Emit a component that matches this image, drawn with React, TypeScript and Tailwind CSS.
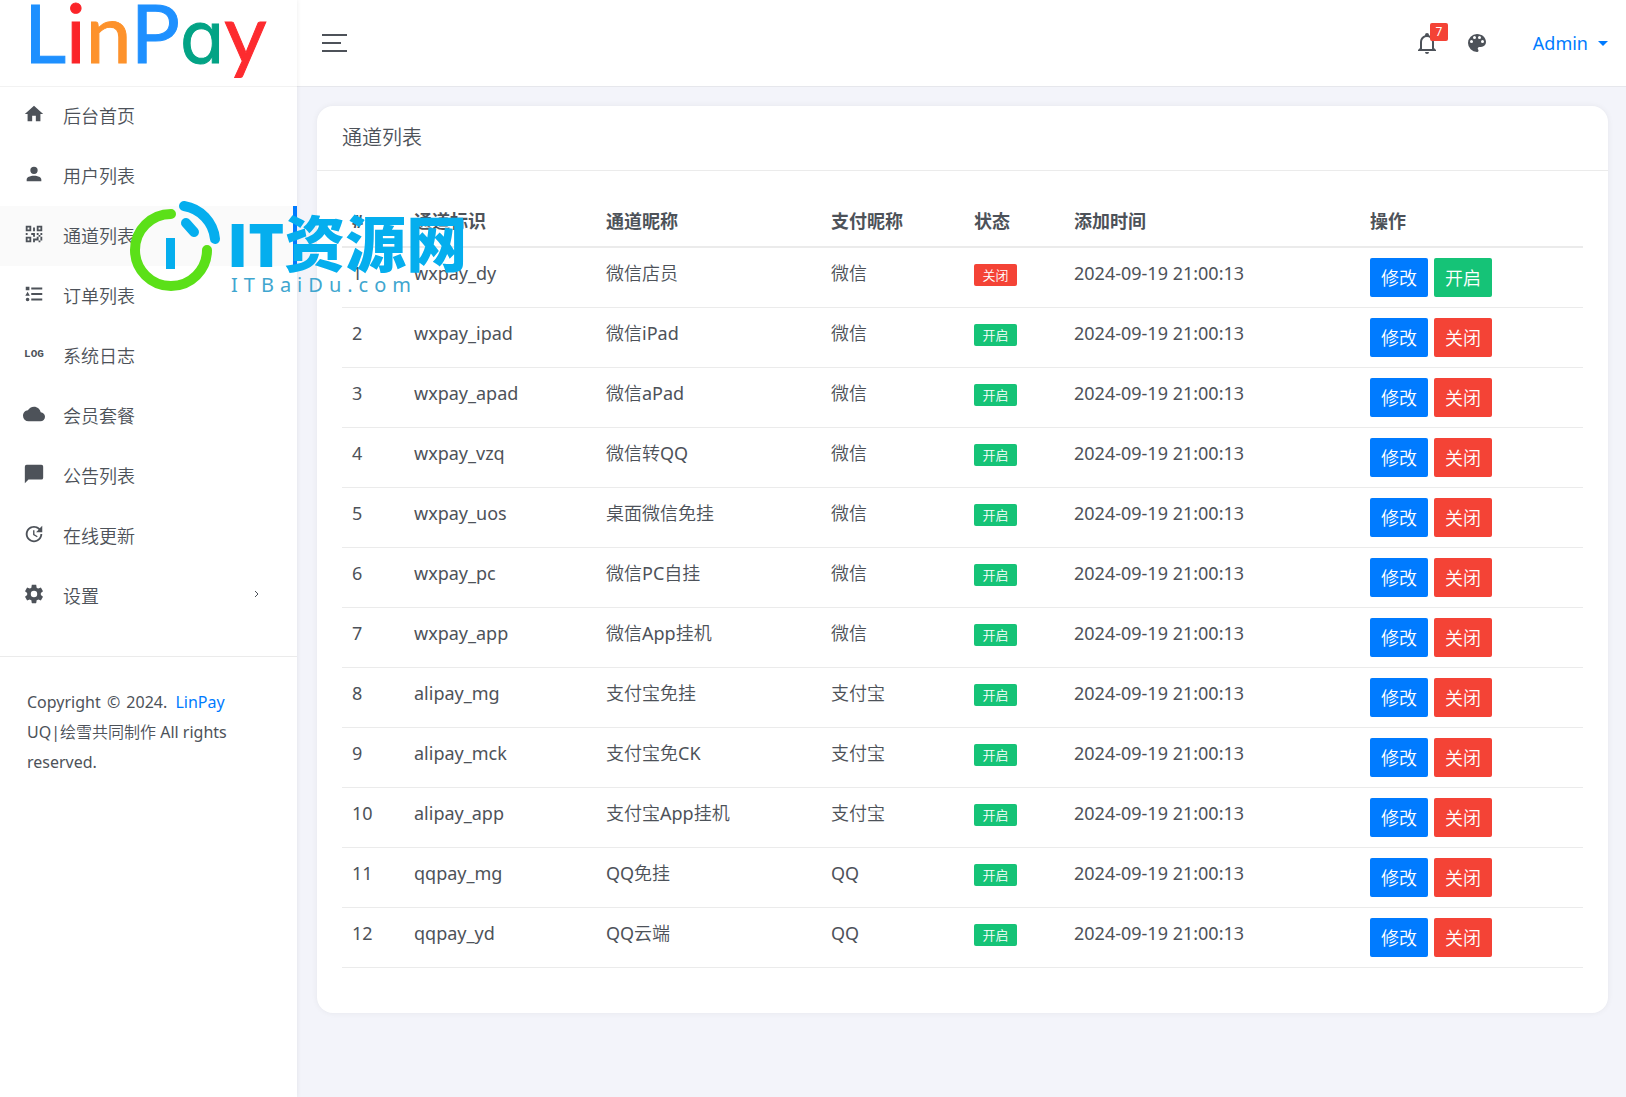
import { clsx } from 'clsx';

const icons = {
  home: 'M10,20V14H14V20H19V12H22L12,3L2,12H5V20H10Z',
  account:
    'M12,4A4,4 0 0,1 16,8A4,4 0 0,1 12,12A4,4 0 0,1 8,8A4,4 0 0,1 12,4M12,14C16.42,14 20,15.79 20,18V20H4V18C4,15.79 7.58,14 12,14Z',
  qrcode:
    'M3,11H5V13H3V11M11,5H13V9H11V5M9,11H13V15H11V13H9V11M15,11H17V13H19V11H21V13H19V15H21V19H19V21H17V19H13V21H11V17H15V15H17V13H15V11M19,19V15H17V19H19M15,3H21V9H15V3M17,5V7H19V5H17M3,3H9V9H3V3M5,5V7H7V5H5M3,15H9V21H3V15M5,17V19H7V17H5Z',
  list: 'M5,9.5L7.5,14H2.5L5,9.5M3,4H7V8H3V4M5,20A2,2 0 0,0 7,18A2,2 0 0,0 5,16A2,2 0 0,0 3,18A2,2 0 0,0 5,20M9,5V7H21V5H9M9,19H21V17H9V19M9,13H21V11H9V13Z',
  cloud:
    'M19.35,10.03C18.67,6.59 15.64,4 12,4C9.11,4 6.6,5.64 5.35,8.03C2.34,8.36 0,10.9 0,14A6,6 0 0,0 6,20H19A5,5 0 0,0 24,15C24,12.36 21.95,10.22 19.35,10.03Z',
  message: 'M20,2H4A2,2 0 0,0 2,4V22L6,18H20A2,2 0 0,0 22,16V4C22,2.89 21.1,2 20,2Z',
  update:
    'M21,10.12H14.22L16.96,7.3C14.23,4.6 9.81,4.5 7.08,7.2C4.35,9.91 4.35,14.28 7.08,17C9.81,19.7 14.23,19.7 16.96,17C18.32,15.65 19,14.08 19,12.1H21C21,14.08 20.12,16.65 18.36,18.39C14.85,21.87 9.15,21.87 5.64,18.39C2.14,14.92 2.11,9.28 5.62,5.81C9.13,2.34 14.76,2.34 18.27,5.81L21,3V10.12M12.5,8V12.25L16,14.33L15.28,15.54L11,13V8H12.5Z',
  settings:
    'M12,15.5A3.5,3.5 0 0,1 8.5,12A3.5,3.5 0 0,1 12,8.5A3.5,3.5 0 0,1 15.5,12A3.5,3.5 0 0,1 12,15.5M19.43,12.97C19.47,12.65 19.5,12.33 19.5,12C19.5,11.67 19.47,11.34 19.43,11L21.54,9.37C21.73,9.22 21.78,8.95 21.66,8.73L19.66,5.27C19.54,5.05 19.27,4.96 19.05,5.05L16.56,6.05C16.04,5.66 15.5,5.32 14.87,5.07L14.5,2.42C14.46,2.18 14.25,2 14,2H10C9.75,2 9.54,2.18 9.5,2.42L9.13,5.07C8.5,5.32 7.96,5.66 7.44,6.05L4.95,5.05C4.73,4.96 4.46,5.05 4.34,5.27L2.34,8.73C2.21,8.95 2.27,9.22 2.46,9.37L4.57,11C4.53,11.34 4.5,11.67 4.5,12C4.5,12.33 4.53,12.65 4.57,12.97L2.46,14.63C2.27,14.78 2.21,15.05 2.34,15.27L4.34,18.73C4.46,18.95 4.73,19.03 4.95,18.95L7.44,17.94C7.96,18.34 8.5,18.68 9.13,18.93L9.5,21.58C9.54,21.82 9.75,22 10,22H14C14.25,22 14.46,21.82 14.5,21.58L14.87,18.93C15.5,18.67 16.04,18.34 16.56,17.94L19.05,18.95C19.27,19.03 19.54,18.95 19.66,18.73L21.66,15.27C21.78,15.05 21.73,14.78 21.54,14.63L19.43,12.97Z',
  bell: 'M10,21H14A2,2 0 0,1 12,23A2,2 0 0,1 10,21M21,19V20H3V19L5,17V11C5,7.9 7.03,5.17 10,4.29C10,4.19 10,4.1 10,4A2,2 0 0,1 12,2A2,2 0 0,1 14,4C14,4.1 14,4.19 14,4.29C16.97,5.17 19,7.9 19,11V17L21,19M17,11A5,5 0 0,0 12,6A5,5 0 0,0 7,11V18H17V11Z',
  palette:
    'M17.5,12A1.5,1.5 0 0,1 16,10.5A1.5,1.5 0 0,1 17.5,9A1.5,1.5 0 0,1 19,10.5A1.5,1.5 0 0,1 17.5,12M14.5,8A1.5,1.5 0 0,1 13,6.5A1.5,1.5 0 0,1 14.5,5A1.5,1.5 0 0,1 16,6.5A1.5,1.5 0 0,1 14.5,8M9.5,8A1.5,1.5 0 0,1 8,6.5A1.5,1.5 0 0,1 9.5,5A1.5,1.5 0 0,1 11,6.5A1.5,1.5 0 0,1 9.5,8M6.5,12A1.5,1.5 0 0,1 5,10.5A1.5,1.5 0 0,1 6.5,9A1.5,1.5 0 0,1 8,10.5A1.5,1.5 0 0,1 6.5,12M12,3A9,9 0 0,0 3,12A9,9 0 0,0 12,21A1.5,1.5 0 0,0 13.5,19.5C13.5,19.11 13.35,18.76 13.11,18.5C12.88,18.23 12.73,17.88 12.73,17.5A1.5,1.5 0 0,1 14.23,16H16A5,5 0 0,0 21,11C21,6.58 16.97,3 12,3Z',
};

type IconName = keyof typeof icons;

const Icon = ({ name, className }: { name: IconName; className?: string }) => (
  <svg viewBox="0 0 24 24" className={className} fill="currentColor" aria-hidden="true">
    <path d={icons[name]} />
  </svg>
);

const menu: { icon: IconName | 'log'; label: string; active?: boolean; sub?: boolean }[] = [
  { icon: 'home', label: '后台首页' },
  { icon: 'account', label: '用户列表' },
  { icon: 'qrcode', label: '通道列表', active: true },
  { icon: 'list', label: '订单列表' },
  { icon: 'log', label: '系统日志' },
  { icon: 'cloud', label: '会员套餐' },
  { icon: 'message', label: '公告列表' },
  { icon: 'update', label: '在线更新' },
  { icon: 'settings', label: '设置', sub: true },
];

const columns = [
  { title: '#', width: 'w-[62px]' },
  { title: '通道标识', width: 'w-[192px]' },
  { title: '通道昵称', width: 'w-[225px]' },
  { title: '支付昵称', width: 'w-[143px]' },
  { title: '状态', width: 'w-[100px]' },
  { title: '添加时间', width: 'w-[296px]' },
  { title: '操作', width: '' },
];

const channels = [
  { code: 'wxpay_dy', name: '微信店员', pay: '微信', open: false },
  { code: 'wxpay_ipad', name: '微信iPad', pay: '微信', open: true },
  { code: 'wxpay_apad', name: '微信aPad', pay: '微信', open: true },
  { code: 'wxpay_vzq', name: '微信转QQ', pay: '微信', open: true },
  { code: 'wxpay_uos', name: '桌面微信免挂', pay: '微信', open: true },
  { code: 'wxpay_pc', name: '微信PC自挂', pay: '微信', open: true },
  { code: 'wxpay_app', name: '微信App挂机', pay: '微信', open: true },
  { code: 'alipay_mg', name: '支付宝免挂', pay: '支付宝', open: true },
  { code: 'alipay_mck', name: '支付宝免CK', pay: '支付宝', open: true },
  { code: 'alipay_app', name: '支付宝App挂机', pay: '支付宝', open: true },
  { code: 'qqpay_mg', name: 'QQ免挂', pay: 'QQ', open: true },
  { code: 'qqpay_yd', name: 'QQ云端', pay: 'QQ', open: true },
];

const Logo = () => (
  <svg viewBox="0 0 297 86" className="block h-[86px] w-[297px] overflow-visible" role="img" aria-label="LinPay">
    <text x="24" y="63" fontSize="82" strokeWidth="1" className="font-['Lato',sans-serif]">
      <tspan fill="#1e90ff" stroke="#1e90ff">L</tspan>
      <tspan fill="#fb2429" stroke="#fb2429">i</tspan>
      <tspan fill="#fd922c" stroke="#fd922c">n</tspan>
      <tspan fill="#1e90ff" stroke="#1e90ff">P</tspan>
      <tspan
        fill="#03a385"
        stroke="#03a385"
        fontSize="72"
        className="font-['Inter',sans-serif] [font-feature-settings:'cv11']"
      >
        a
      </tspan>
      <tspan fill="#fd2b2f" stroke="#fd2b2f">y</tspan>
    </text>
  </svg>
);

const Watermark = () => (
  <svg
    viewBox="0 0 350 100"
    className="pointer-events-none absolute left-[125px] top-[196px] z-20 h-[100px] w-[350px] overflow-visible"
    aria-hidden="true"
  >
    <g fill="none" strokeLinecap="round" strokeWidth="10">
      <path d="M46 18A36 36 0 1 0 82 54" stroke="#5be018" />
      <path d="M59 10A37 37 0 0 1 90 43" stroke="#05aeee" />
      <path d="M61 27L69 36" stroke="#05aeee" />
    </g>
    <path d="M41 42H50V73H41Z" fill="#05aeee" />
    <text x="102" y="71" fontSize="61" fontWeight="900" fill="#05aeee" className="font-['Open_Sans','Noto_Sans_CJK_SC',sans-serif]">
      IT资源网
    </text>
    <text x="106" y="96" fontSize="20" fill="#3fa6cf" className="font-['Noto_Sans',sans-serif] tracking-[6px]">
      ITBaiDu.com
    </text>
  </svg>
);

const Sidebar = () => (
  <aside className="z-10 w-[297px] shrink-0 bg-white shadow-[0_0_5px_rgba(0,0,0,0.08)]">
    <a href="#" className="block border-b border-[#f2f2f2]">
      <Logo />
    </a>
    <nav className="-mt-px pb-[30px]">
      {menu.map((item) => (
        <a
          key={item.label}
          href="#"
          className={clsx(
            'flex h-[60px] items-center pl-[23px] pr-9',
            item.active && 'bg-[#fafafa] shadow-[inset_-4px_0_0_#007bff]'
          )}
        >
          <span className="mr-[18px] flex w-[22px] justify-center pb-1">
            {item.icon === 'log' ? (
              <span className="font-['Liberation_Mono',monospace] text-[11px] font-bold">LOG</span>
            ) : (
              <Icon name={item.icon} className="size-[22px]" />
            )}
          </span>
          <span>{item.label}</span>
          {item.sub && (
            <svg viewBox="0 0 8 8" className="ml-auto mb-1 size-2" fill="none" stroke="currentColor">
              <path d="M2 1L5 4L2 7" />
            </svg>
          )}
        </a>
      ))}
    </nav>
    <footer className="border-t border-[#ebebeb] px-[27px] py-[30px] text-base leading-[30px]">
      Copyright <span className="mx-0.5">©</span> 2024. <a href="#" className="ml-1 text-[#007bff]">LinPay</a>
      <br />
      UQ|绘雪共同制作 All rights reserved.
    </footer>
  </aside>
);

const Header = () => (
  <header className="flex h-[87px] items-center border-b border-[#e6e7ec] bg-white pl-[25px] pr-[18px]">
    <button type="button" aria-label="菜单" className="flex w-[25px] flex-col gap-1.5">
      <span className="h-0.5 w-full bg-[#4d5259]" />
      <span className="h-0.5 w-[19px] bg-[#4d5259]" />
      <span className="h-0.5 w-full bg-[#4d5259]" />
    </button>
    <div className="ml-auto flex items-center">
      <button type="button" aria-label="通知" className="relative mr-[26px]">
        <Icon name="bell" className="size-6" />
        <span className="absolute -top-2 left-[15px] flex size-[18px] items-center justify-center rounded-xs bg-[#f44336] text-xs text-white">
          7
        </span>
      </button>
      <button type="button" aria-label="主题" className="mr-11">
        <Icon name="palette" className="size-6" />
      </button>
      <button type="button" className="flex items-center gap-2.5 text-[#007bff]">
        Admin
        <span className="border-x-5 border-t-5 border-x-transparent border-t-[#007bff]" />
      </button>
    </div>
  </header>
);

const ChannelTable = () => (
  <table className="w-full table-fixed border-collapse text-left">
    <thead className="font-['Noto_Sans','Noto_Sans_CJK_SC',sans-serif]">
      <tr className="border-b-2 border-[#ebebeb]">
        {columns.map((col) => (
          <th key={col.title} className={clsx('p-2.5 font-bold', col.width)}>
            {col.title}
          </th>
        ))}
      </tr>
    </thead>
    <tbody>
      {channels.map((row, index) => (
        <tr key={row.code} className="border-b border-[#ebebeb] align-top">
          <td className="p-2.5">{index + 1}</td>
          <td className="p-2.5">{row.code}</td>
          <td className="p-2.5">{row.name}</td>
          <td className="p-2.5">{row.pay}</td>
          <td className="p-2.5">
            <span
              className={clsx(
                'mt-1.5 block w-[43px] rounded-xs text-center text-[13px] leading-[22px] text-white',
                row.open ? 'bg-[#15c377]' : 'bg-[#f44336]'
              )}
            >
              {row.open ? '开启' : '关闭'}
            </span>
          </td>
          <td className="p-2.5">2024-09-19 21:00:13</td>
          <td className="p-2.5">
            <div className="flex gap-1.5 text-white">
              <button type="button" className="h-[39px] rounded-xs bg-[#007bff] px-[11px]">
                修改
              </button>
              <button
                type="button"
                className={clsx('h-[39px] rounded-xs px-[11px]', row.open ? 'bg-[#f44336]' : 'bg-[#15c377]')}
              >
                {row.open ? '关闭' : '开启'}
              </button>
            </div>
          </td>
        </tr>
      ))}
    </tbody>
  </table>
);

export default function App() {
  return (
    <div className="relative flex min-h-screen bg-[#f3f4fa] font-['Noto_Sans','Noto_Sans_CJK_SC_DemiLight','Noto_Sans_CJK_SC_Light','Noto_Sans_CJK_SC',sans-serif] text-[18px] leading-[30px] text-[#4d5259]">
      <Sidebar />
      <div className="min-w-0 flex-1">
        <Header />
        <main className="pb-5 pl-5 pr-[18px] pt-[19px]">
          <section className="rounded-2xl bg-white shadow-[0_0_6px_rgba(0,0,0,0.06)]">
            <h1 className="border-b border-[#ebebeb] px-[25px] py-[17px] text-xl leading-[30px]">通道列表</h1>
            <div className="px-[25px] pb-[45px] pt-[25px]">
              <ChannelTable />
            </div>
          </section>
        </main>
      </div>
      <Watermark />
    </div>
  );
}
